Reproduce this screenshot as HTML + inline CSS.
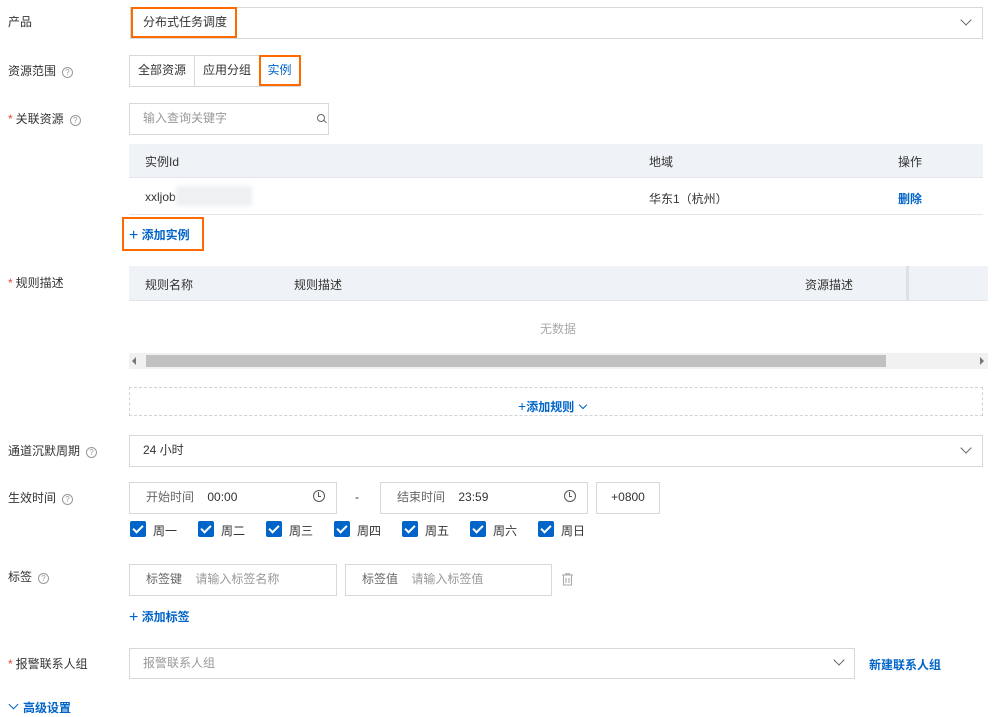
<!DOCTYPE html>
<html><head><meta charset="utf-8"><style>
*{box-sizing:border-box;margin:0;padding:0}
body{width:994px;height:717px;background:#fff;font-family:"Liberation Sans","Noto Sans CJK SC",sans-serif;font-size:12px;color:#333;position:relative;overflow:hidden}
.a{position:absolute}
.lbl{position:absolute;left:8px;color:#333;font-size:12px;line-height:14px}
.lbl .s{color:#e84738;margin-right:3px}
.q{display:inline-block;width:11px;height:11px;border:1px solid #999;border-radius:50%;font-size:8px;line-height:9px;text-align:center;color:#999;margin-left:6px;vertical-align:0}
.box{position:absolute;border:1px solid #d7d8d9;background:#fff;line-height:29px}
.ph{color:#999}
.blue{color:#0064c8;font-weight:bold}
.org{position:absolute;border:2.5px solid #ff6a00}
.chev{position:absolute;width:8px;height:8px;border-right:1.5px solid #666;border-bottom:1.5px solid #666;transform:rotate(45deg)}
.cb{position:absolute;top:521px;width:16px;height:16px;background:#0064c8;border-radius:2px}
.cb:after{content:"";position:absolute;left:5px;top:2px;width:4px;height:8px;border-right:2px solid #fff;border-bottom:2px solid #fff;transform:rotate(45deg)}
.cbl{position:absolute;top:522px;font-size:12px}
.clock{position:absolute;width:12px;height:12px;border:1.5px solid #555;border-radius:50%}
.clock:after{content:"";position:absolute;left:3.5px;top:1px;width:2px;height:4px;border-left:1.5px solid #555;border-bottom:1.5px solid #555}
</style></head><body>

<div class="lbl" style="top:15px">产品</div>
<div class="box" style="left:130px;top:7px;width:853px;height:32px;padding-left:12px">分布式任务调度</div>
<div class="org" style="left:131px;top:7px;width:106px;height:31px"></div>
<div class="chev" style="left:962px;top:16px"></div>

<div class="lbl" style="top:64px">资源范围<span class="q">?</span></div>
<div class="box" style="left:129px;top:55px;width:66px;height:32px;text-align:center">全部资源</div>
<div class="box" style="left:194px;top:55px;width:66px;height:32px;text-align:center">应用分组</div>
<div class="box" style="left:259px;top:55px;width:41px;height:32px;text-align:center;color:#0064c8">实例</div>
<div class="org" style="left:259px;top:55px;width:42px;height:31px"></div>

<div class="lbl" style="top:112px"><span class="s">*</span>关联资源<span class="q">?</span></div>
<div class="box ph" style="left:129px;top:103px;width:200px;height:32px;padding-left:13px">输入查询关键字</div>
<div class="a" style="left:317px;top:114px;width:8px;height:8px;border:1.3px solid #666;border-radius:50%"></div>
<div class="a" style="left:323px;top:121px;width:4px;height:1.3px;background:#666;transform:rotate(45deg)"></div>

<div class="a" style="left:129px;top:144px;width:854px;height:34px;background:#eff2f6;border-bottom:1px solid #e3e5e8"></div>
<div class="a" style="left:145px;top:153px">实例Id</div>
<div class="a" style="left:649px;top:153px">地域</div>
<div class="a" style="left:898px;top:153px">操作</div>
<div class="a" style="left:129px;top:214px;width:854px;height:1px;background:#e3e5e8"></div>
<div class="a" style="left:145px;top:190px">xxljob</div>
<div class="a" style="left:176px;top:186px;width:76px;height:20px;background:#eef0f2;filter:blur(2px)"></div>
<div class="a" style="left:649px;top:190px">华东1（杭州）</div>
<div class="a blue" style="left:898px;top:190px">删除</div>

<div class="org" style="left:122px;top:217px;width:82px;height:34px"></div>
<div class="a blue" style="left:129px;top:226px"><span style="font-weight:normal;font-size:16px;vertical-align:-1px">+</span> 添加实例</div>

<div class="lbl" style="top:276px"><span class="s">*</span>规则描述</div>
<div class="a" style="left:129px;top:266px;width:859px;height:35px;background:#eff2f6;border-bottom:1px solid #e3e5e8"></div>
<div class="a" style="left:906px;top:266px;width:3px;height:35px;background:#dde1e6"></div>
<div class="a" style="left:145px;top:276px">规则名称</div>
<div class="a" style="left:294px;top:276px">规则描述</div>
<div class="a" style="left:805px;top:276px">资源描述</div>
<div class="a" style="left:540px;top:320px;color:#aaa">无数据</div>
<div class="a" style="left:129px;top:353px;width:859px;height:16px;background:#f1f1f1"></div>
<div class="a" style="left:146px;top:355px;width:740px;height:12px;background:#c1c1c1"></div>
<div class="a" style="left:132px;top:357px;border:4px solid transparent;border-right:4px solid #777;border-left:0"></div>
<div class="a" style="left:980px;top:357px;border:4px solid transparent;border-left:4px solid #777;border-right:0"></div>
<div class="a" style="left:129px;top:387px;width:854px;height:29px;border:1px dashed #d0d3d6"></div>
<div class="a blue" style="left:518px;top:398px"><span style="font-weight:normal;font-size:14px">+</span>添加规则 <span style="display:inline-block;width:6px;height:6px;border-right:1.5px solid #0064c8;border-bottom:1.5px solid #0064c8;transform:rotate(45deg);vertical-align:3px;margin-left:2px"></span></div>

<div class="lbl" style="top:444px">通道沉默周期<span class="q">?</span></div>
<div class="box" style="left:129px;top:435px;width:854px;height:32px;padding-left:13px">24 小时</div>
<div class="chev" style="left:962px;top:444px"></div>

<div class="lbl" style="top:491px">生效时间<span class="q">?</span></div>
<div class="box" style="left:129px;top:482px;width:208px;height:32px;padding-left:16px"><span style="color:#666">开始时间</span>&nbsp;&nbsp;&nbsp; 00:00</div>
<div class="clock" style="left:313px;top:490px"></div>
<div class="a" style="left:355px;top:490px">-</div>
<div class="box" style="left:380px;top:482px;width:208px;height:32px;padding-left:16px"><span style="color:#666">结束时间</span>&nbsp;&nbsp;&nbsp; 23:59</div>
<div class="clock" style="left:564px;top:490px"></div>
<div class="box" style="left:596px;top:482px;width:64px;height:32px;text-align:center">+0800</div>

<div class="cb" style="left:130px"></div><div class="cbl" style="left:153px">周一</div>
<div class="cb" style="left:198px"></div><div class="cbl" style="left:221px">周二</div>
<div class="cb" style="left:266px"></div><div class="cbl" style="left:289px">周三</div>
<div class="cb" style="left:334px"></div><div class="cbl" style="left:357px">周四</div>
<div class="cb" style="left:402px"></div><div class="cbl" style="left:425px">周五</div>
<div class="cb" style="left:470px"></div><div class="cbl" style="left:493px">周六</div>
<div class="cb" style="left:538px"></div><div class="cbl" style="left:561px">周日</div>

<div class="lbl" style="top:570px">标签<span class="q">?</span></div>
<div class="box" style="left:129px;top:564px;width:208px;height:32px;padding-left:16px;color:#666">标签键&nbsp;&nbsp;&nbsp; <span class="ph">请输入标签名称</span></div>
<div class="box" style="left:345px;top:564px;width:207px;height:32px;padding-left:16px;color:#666">标签值&nbsp;&nbsp;&nbsp; <span class="ph">请输入标签值</span></div>
<svg class="a" style="left:561px;top:573px" width="13" height="13" viewBox="0 0 13 13"><path d="M1 2h11M4.5 2V0.8h4V2M2.5 2.5v9.5h8V2.5M5 5v5M8 5v5" stroke="#aaa" fill="none" stroke-width="1.1"/></svg>
<div class="a blue" style="left:129px;top:608px"><span style="font-weight:normal;font-size:16px;vertical-align:-1px">+</span> 添加标签</div>

<div class="lbl" style="top:657px"><span class="s">*</span>报警联系人组</div>
<div class="box ph" style="left:129px;top:648px;width:726px;height:31px;padding-left:13px">报警联系人组</div>
<div class="chev" style="left:835px;top:656px"></div>
<div class="a blue" style="left:869px;top:656px">新建联系人组</div>

<div class="a blue" style="left:10px;top:699px"><span style="display:inline-block;width:7px;height:7px;border-right:1.5px solid #0064c8;border-bottom:1.5px solid #0064c8;transform:rotate(45deg);vertical-align:4px;margin-right:6px"></span>高级设置</div>
</body></html>
